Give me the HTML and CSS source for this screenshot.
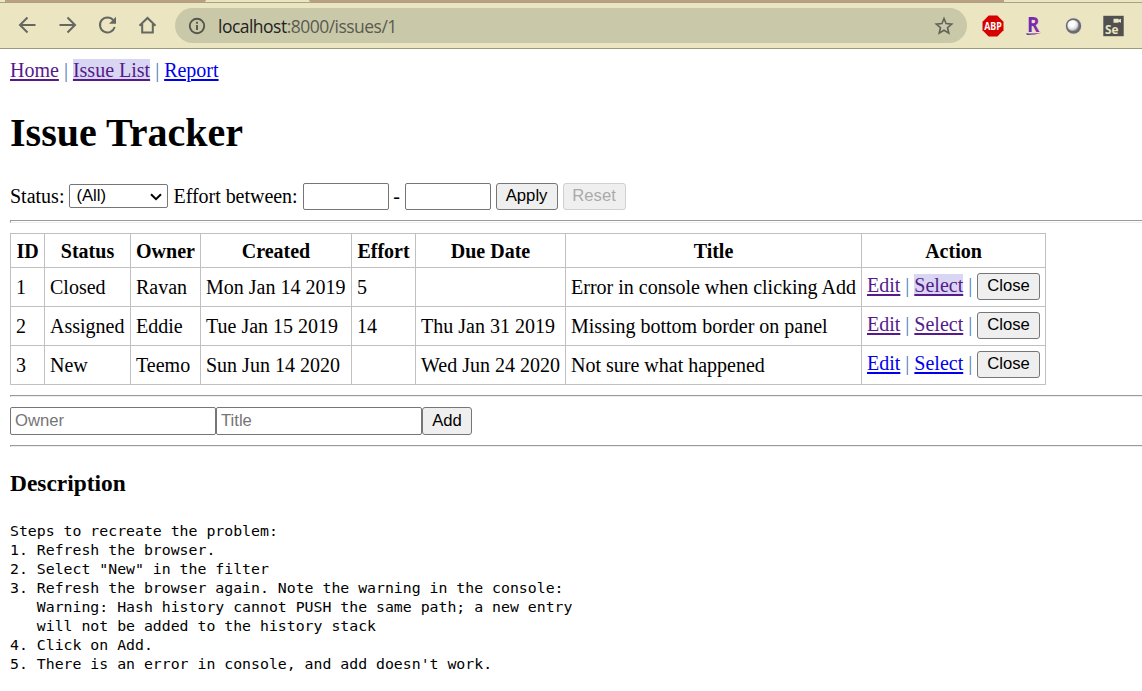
FILE: index.html
```html
<!DOCTYPE html>
<html lang="en">
<head>
<meta charset="utf-8">
<title>Issue Tracker</title>
<link rel="stylesheet" href="styles.css">
</head>
<body>
<header class="browser">
  <div class="tabs"><span class="tab tab-left"></span><span class="tab tab-right"></span></div>
  <div class="toolbar">
    <svg class="icon" viewBox="0 0 20 20"><path d="M18.500 10H3.500M10.500 2.500 3 10l7.500 7.500"/></svg>
    <svg class="icon" viewBox="0 0 20 20"><path d="M2.500 10h15M10.500 2.500l7.500 7.500-7.500 7.500"/></svg>
    <svg class="icon" viewBox="0 0 20 20"><path d="M16.300 5.200A7.500 7.500 0 1 0 17.700 12"/><path class="solid" d="M19 1.800v7h-7z"/></svg>
    <svg class="icon" viewBox="0 0 20 20"><path d="M2.500 10.800 10.500 3l8 7.800M5.200 9v8.500h10.600V9"/></svg>
    <div class="address">
      <svg class="info" viewBox="0 0 18 18"><circle cx="9" cy="9" r="7.200"/><path d="M9 8v5M9 4.800v1.900"/></svg>
      <span class="url"><b>localhost</b>:8000/issues/1</span>
      <svg class="star" viewBox="0 0 20 20"><path d="m10 2.500 2.100 5.100 5.600.5-4.200 3.600 1.300 5.500-4.800-2.900-4.800 2.900 1.300-5.500-4.200-3.600 5.600-.5z"/></svg>
    </div>
    <div class="extensions">
      <svg class="ext" viewBox="0 0 22 22"><path fill="#d50000" d="M6.700 .5h8.600L21.500 6.700v8.600L15.300 21.500H6.700L.5 15.300V6.700z"/><text x="11" y="15" class="abp" textLength="17.500" lengthAdjust="spacingAndGlyphs">ABP</text></svg>
      <svg class="ext" viewBox="0 0 22 22"><defs><linearGradient id="r" x1="0" x2="1"><stop offset="0" stop-color="#5b2fb5"/><stop offset="1" stop-color="#9a27a5"/></linearGradient></defs><text x="5" y="16.500" class="rakuten" fill="url(#r)" textLength="12.500" lengthAdjust="spacingAndGlyphs">R</text><path fill="url(#r)" d="M4 18.300q8 .7 15.500-.5-6 2.200-14.500 2.300z"/></svg>
      <svg class="ext" viewBox="0 0 22 22"><defs><radialGradient id="ball" cx=".4" cy=".35" r=".65"><stop offset=".35" stop-color="#fff"/><stop offset=".75" stop-color="#ddd"/><stop offset="1" stop-color="#999"/></radialGradient></defs><circle cx="11.500" cy="11" r="8.700" fill="#e0dfd8"/><circle cx="11.500" cy="11" r="7.700" fill="#6c6c6c"/><circle cx="11" cy="10.500" r="5.600" fill="url(#ball)"/></svg>
      <svg class="ext" viewBox="0 0 22 22"><path fill="#505050" d="M1.300.8h20.400v20.400H1.300z"/><path fill="#ece5c1" d="M11.500 3.800h5v1l2.500-1v4l-2.500-1v1h-5z"/><text x="3" y="19.200" class="selenium" textLength="13.500" lengthAdjust="spacingAndGlyphs">Se</text></svg>
    </div>
  </div>
</header>
<main class="page">
  <nav class="nav"><a class="visited" href="#">Home</a> <span class="bar">|</span> <a class="visited active" href="#">Issue List</a> <span class="bar">|</span> <a href="#">Report</a></nav>
  <h1>Issue Tracker</h1>
  <div class="filter">
    <span class="label">Status:</span>
    <div class="select">(All)<svg class="chevron" viewBox="0 0 12 8"><path d="m1 1.300 5 4.900 5-4.900"/></svg></div>
    <span class="label between">Effort between:</span>
    <input class="effort"><span class="dash">-</span><input class="effort">
    <button class="apply">Apply</button>
    <button class="reset" disabled>Reset</button>
  </div>
  <hr class="tall">
  <table>
    <colgroup><col class="c-id"><col class="c-status"><col class="c-owner"><col class="c-created"><col class="c-effort"><col class="c-due"><col class="c-title"><col class="c-action"></colgroup>
    <thead><tr><th>ID</th><th>Status</th><th>Owner</th><th>Created</th><th>Effort</th><th>Due Date</th><th>Title</th><th>Action</th></tr></thead>
    <tbody>
      <tr><td>1</td><td>Closed</td><td>Ravan</td><td>Mon Jan 14 2019</td><td>5</td><td></td><td>Error in console when clicking Add</td><td><div class="actions"><span class="links"><a class="visited" href="#">Edit</a> <span class="bar">|</span> <a class="visited active" href="#">Select</a> <span class="bar">|</span></span><button>Close</button></div></td></tr>
      <tr><td>2</td><td>Assigned</td><td>Eddie</td><td>Tue Jan 15 2019</td><td>14</td><td>Thu Jan 31 2019</td><td>Missing bottom border on panel</td><td><div class="actions"><span class="links"><a class="visited" href="#">Edit</a> <span class="bar">|</span> <a class="visited" href="#">Select</a> <span class="bar">|</span></span><button>Close</button></div></td></tr>
      <tr><td>3</td><td>New</td><td>Teemo</td><td>Sun Jun 14 2020</td><td></td><td>Wed Jun 24 2020</td><td>Not sure what happened</td><td><div class="actions"><span class="links"><a href="#">Edit</a> <span class="bar">|</span> <a href="#">Select</a> <span class="bar">|</span></span><button>Close</button></div></td></tr>
    </tbody>
  </table>
  <hr>
  <div class="add"><input placeholder="Owner"><input placeholder="Title"><button>Add</button></div>
  <hr>
  <h3>Description</h3>
  <pre>Steps to recreate the problem:
1. Refresh the browser.
2. Select "New" in the filter
3. Refresh the browser again. Note the warning in the console:
   Warning: Hash history cannot PUSH the same path; a new entry
   will not be added to the history stack
4. Click on Add.
5. There is an error in console, and add doesn't work.</pre>
</main>
</body>
</html>
```
FILE: styles.css
```css
* { box-sizing: border-box; }
body { margin: 0; background: #fff; color: #000; font: 20px/22px "Liberation Serif", serif; height: 691px; overflow: hidden; }

.browser { height: 49px; background: #ece5c1; border-bottom: 1px solid #9c9c7c; }
.tabs { display: flex; justify-content: space-between; height: 3px; background: linear-gradient(#ece5c1 2px, #a5a388 2px); }
.tab { height: 2px; background: #bc9f80; }
.tab-left { width: 201px; margin-left: 5px; border-bottom-right-radius: 3px; }
.tab-right { width: 695px; margin-right: 138px; border-bottom-left-radius: 3px; }
.toolbar { display: flex; align-items: center; height: 45px; padding-left: 17px; }
.icon { width: 20px; height: 20px; margin-right: 20px; margin-top: -1px; fill: none; stroke: #656762; stroke-width: 2; }
.icon .solid { fill: #656762; stroke: none; }
.address { display: flex; align-items: center; width: 792px; height: 35px; margin-left: -2px; padding: 0 13px; border-radius: 18px; background: #c9c9a9; }
.info { width: 18px; height: 18px; fill: none; stroke: #55574f; stroke-width: 1.9; }
.url { margin-left: 12px; font: 17.500px/24px "Open Sans", sans-serif; color: #5a5b50; letter-spacing: -0.52px; white-space: nowrap; }
.url b { font-weight: 400; color: #222; }
.star { width: 20px; height: 20px; margin-left: auto; fill: none; stroke: #60625b; stroke-width: 1.6; }
.extensions { display: flex; gap: 18px; margin-left: 15px; }
.ext { width: 22px; height: 22px; overflow: visible; }
.abp { font: 700 11px "Open Sans", sans-serif; fill: #fff; text-anchor: middle; }
.rakuten { font: 700 21px "Open Sans", sans-serif; }
.selenium { font: 700 13px "Open Sans", sans-serif; fill: #ece5c1; }

.page { padding: 10px 0 0 10px; }
a { color: #00e; text-decoration: underline; text-decoration-thickness: 2px; text-underline-offset: 2px; }
.visited { color: #551a8b; }
.active { background: #d8d6f2; }
.bar { color: #4a7ab8; }
.nav { height: 23px; line-height: 23px; white-space: nowrap; }
h1 { margin: 28px 0 27px; font-size: 40px; line-height: 46px; }

input, button, .select { font: 16.667px/20px "Liberation Sans", sans-serif; color: #000; }
input { height: 28px; padding: 1px 4px; border: 1px solid #767676; border-radius: 2px; background: #fff; outline: none; }
input::placeholder { color: #757575; }
button { height: 27px; padding: 0 0 2px; border: 1px solid #767676; border-radius: 3px; background: #efefef; }
.filter { display: flex; align-items: center; height: 27px; white-space: nowrap; }
.label { margin-top: -2px; }
.select { display: flex; align-items: center; justify-content: space-between; width: 99px; height: 24px; margin: -1px 0 0 5px; padding: 0 5px 1px 6px; border: 1px solid #767676; border-radius: 2px; }
.chevron { width: 12px; height: 8px; margin-top: 2px; fill: none; stroke: #000; stroke-width: 2; }
.between { margin-left: 5px; margin-right: 5px; letter-spacing: -0.03px; }
.effort { width: 86px; height: 27px; }
.dash { width: 16px; margin-top: -2px; text-align: center; }
.apply { width: 62px; margin-left: 5px; }
.reset { width: 63px; margin-left: 5px; color: #aaa; border-color: #d0d0d0; }

hr { height: 2px; margin: 10px 0; border: 1px solid #eee; border-top-color: #9a9a9a; border-left-color: #9a9a9a; border-right: 0; }
.tall { height: 3px; }
table { width: 1036px; table-layout: fixed; border-collapse: collapse; }
th, td { height: 39px; padding: 0 5px; border: 1px solid #c0c0c0; text-align: left; white-space: nowrap; }
td { padding-bottom: 1px; }
th { height: 34px; text-align: center; }
.c-id { width: 34px; } .c-status { width: 86px; } .c-owner { width: 70px; } .c-created { width: 151px; }
.c-effort { width: 64px; } .c-due { width: 150px; } .c-title { width: 296px; } .c-action { width: 184px; }
.actions { display: flex; align-items: center; justify-content: space-between; height: 27px; }
.links { margin-top: -3px; }
.actions button { width: 63px; padding-bottom: 1px; }
.add { display: flex; height: 28px; }
.add input { width: 206px; padding-bottom: 2px; }
.add button { width: 50px; height: 28px; padding-bottom: 1px; }
h3 { margin: 23px 0 25px; font-size: 23.400px; line-height: 26px; }
pre { margin: 0; font: 14.830px/19px "DejaVu Sans Mono", monospace; }
```
